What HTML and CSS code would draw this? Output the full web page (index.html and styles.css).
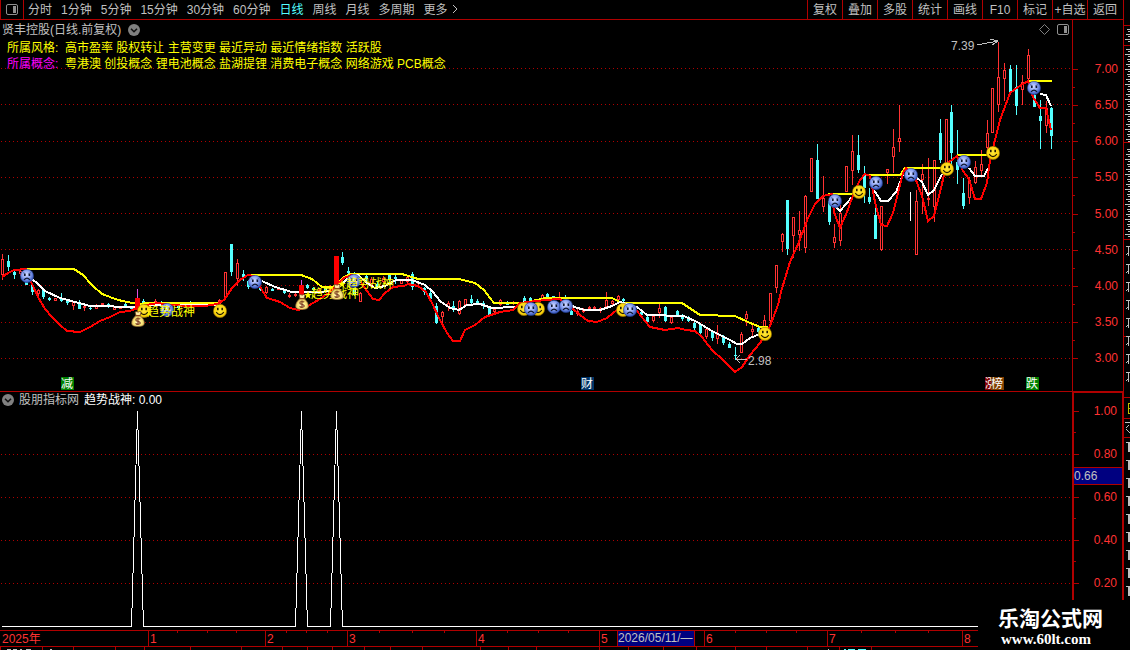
FILE: index.html
```html
<!Doctype html>
<html lang="zh-CN">
<head>
    <meta charset="UTF-8">
    <meta name="viewport" content="width=device-width, initial-scale=1.0">
    <title>贤丰控股 日线</title>
    <link rel="stylesheet" href="styles.css">
</head>
<body>
<svg class="defs" width="0" height="0">
    <defs>
        <radialGradient id="blue" cx="45%" cy="40%" r="60%">
            <stop offset="0" stop-color="#d4dcff"/>
            <stop offset="0.5" stop-color="#8ca4f4"/>
            <stop offset="1" stop-color="#2c4cb4"/>
        </radialGradient>
        <radialGradient id="gold" cx="50%" cy="45%" r="60%">
            <stop offset="0" stop-color="#ffe93c"/>
            <stop offset="0.7" stop-color="#fbd40c"/>
            <stop offset="1" stop-color="#b88a00"/>
        </radialGradient>
        <radialGradient id="cream" cx="50%" cy="60%" r="55%">
            <stop offset="0" stop-color="#fffbe0"/>
            <stop offset="0.5" stop-color="#ffee80"/>
            <stop offset="1" stop-color="#e0c060"/>
        </radialGradient>
        <symbol id="sad" viewBox="0 0 14 14">
            <circle cx="7" cy="7" r="6.7" fill="url(#blue)" stroke="#20387c" stroke-width="0.5"/>
            <path d="M3.3 3.8L5.6 4.8M10.7 3.8L8.4 4.8" stroke="#203060" stroke-width="0.8"/>
            <rect x="4" y="5" width="1.6" height="2" fill="#101830"/>
            <rect x="8.6" y="5" width="1.6" height="2" fill="#101830"/>
            <path d="M4 10.8Q7 7.4 10 10.8" fill="none" stroke="#101830" stroke-width="1.1"/>
        </symbol>
        <symbol id="happy" viewBox="0 0 14 14">
            <circle cx="7" cy="7" r="6.7" fill="url(#gold)" stroke="#8c6c00" stroke-width="0.5"/>
            <rect x="4" y="3.8" width="1.6" height="2.4" fill="#201800"/>
            <rect x="8.4" y="3.8" width="1.6" height="2.4" fill="#201800"/>
            <path d="M3.2 8.2Q7 13 10.8 8.2" fill="none" stroke="#201800" stroke-width="1.1"/>
        </symbol>
        <symbol id="bag" viewBox="0 0 14 16">
            <path d="M4 1L6 0.5L7 1.2L8.5 0.5L10.2 1L9 4.6H5Z" fill="#ffe9a0" stroke="#6c4020" stroke-width="0.8"/>
            <path d="M5 4.6H9C11.5 6.5 13.5 9.5 13.3 12.2C13.1 14.6 11.5 15.4 7 15.4S0.9 14.6 0.7 12.2C0.5 9.5 2.5 6.5 5 4.6Z" fill="url(#cream)" stroke="#8c6430" stroke-width="0.7"/>
            <path d="M4.6 4.7H9.4" stroke="#8c3c10" stroke-width="1"/>
            <path d="M9.2 8.2C8.4 7.2 4.8 7.2 4.8 8.9S9.3 10.2 9.3 12S5.4 13.6 4.6 12.4M7 6.6V14" fill="none" stroke="#7c3c20" stroke-width="1.1"/>
        </symbol>
        <symbol id="star" viewBox="0 0 12 12">
            <path d="M6 0L7.5 4.2L12 4.4L8.5 7.2L9.7 11.6L6 9L2.3 11.6L3.5 7.2L0 4.4L4.5 4.2Z" fill="#ffff00"/>
        </symbol>
        <symbol id="chevron" viewBox="0 0 12 12">
            <circle cx="6" cy="6" r="6" fill="#808080"/>
            <path d="M3 4.7L6 7.7L9 4.7" fill="none" stroke="#101010" stroke-width="1.6"/>
        </symbol>
        <symbol id="split" viewBox="0 0 12 11">
            <rect x="0.5" y="0.5" width="11" height="10" rx="1.5" fill="none" stroke="#909090"/>
            <rect x="7" y="2" width="3" height="7" fill="#909090"/>
        </symbol>
    </defs>
</svg>

<div class="app">
    <div class="main">
        <div class="toolbar">
            <button class="split" aria-label="分栏"><svg width="12" height="11"><use href="#split"/></svg></button>
            <div class="period">
                <button>分时</button>
                <button>1分钟</button>
                <button>5分钟</button>
                <button>15分钟</button>
                <button>30分钟</button>
                <button>60分钟</button>
                <button class="on">日线</button>
                <button>周线</button>
                <button>月线</button>
                <button>多周期</button>
                <button>更多<svg class="more" width="6" height="10"><path d="M1 1L5 5L1 9" fill="none" stroke="#c0c0c0"/></svg></button>
            </div>
            <div class="tools">
                <button>复权</button>
                <button>叠加</button>
                <button>多股</button>
                <button>统计</button>
                <button>画线</button>
                <button>F10</button>
                <button>标记</button>
                <button>+自选</button>
                <button>返回</button>
            </div>
        </div>

        <div class="panel price">
            <div class="plot">
                <svg id="kline" viewBox="0 20 1072 371"></svg>
                <div class="info">
                    <div class="title">
                        <span>贤丰控股(日线.前复权)</span>
                        <svg width="12" height="12"><use href="#chevron"/></svg>
                        <svg class="diamond" width="11" height="11"><path d="M5.5 0.5L10.5 5.5L5.5 10.5L0.5 5.5Z" fill="none" stroke="#808080"/></svg>
                        <svg width="12" height="11"><use href="#split"/></svg>
                    </div>
                    <p><b>所属风格:</b>高市盈率 股权转让 主营变更 最近异动 最近情绪指数 活跃股</p>
                    <p><b class="pink">所属概念:</b>粤港澳 创投概念 锂电池概念 盐湖提锂 消费电子概念 网络游戏 PCB概念</p>
                </div>
            </div>
            <ul class="axis">
                <li>7.00</li>
                <li>6.50</li>
                <li>6.00</li>
                <li>5.50</li>
                <li>5.00</li>
                <li>4.50</li>
                <li>4.00</li>
                <li>3.50</li>
                <li>3.00</li>
            </ul>
        </div>

        <div class="panel signal">
            <div class="plot">
                <svg id="signal" viewBox="0 392 1072 238"></svg>
                <div class="info">
                    <div class="title">
                        <svg width="12" height="12"><use href="#chevron"/></svg>
                        <span>股朋指标网</span>
                        <span class="white">趋势战神: 0.00</span>
                    </div>
                </div>
            </div>
            <ul class="axis">
                <li>1.00</li>
                <li>0.80</li>
                <li>0.60</li>
                <li>0.40</li>
                <li>0.20</li>
                <li class="cur">0.66</li>
            </ul>
        </div>

        <div class="time">
            <svg id="time" viewBox="0 630 1072 20"></svg>
        </div>
    </div>
    <div class="side">
        <svg id="side" width="6" height="650"></svg>
    </div>
    <div class="mark">
        <strong>乐淘公式网</strong>
        <span>www.60lt.com</span>
    </div>
</div>

<script>
    // [x, high, top, bottom, low, type]  r: up  c: down  f: filled  w: white
    var bars=[
        [2,254,259,275,280,'r'],[8,255,261,267,271,'c'],[14,270,272,275,279,'c'],[20,268,271,274,276,'r'],
        [26,276,280,285,285,'c'],[32,284,285,292,295,'c'],[38,289,290,294,298,'r'],[43,289,290,297,299,'c'],
        [49,297,298,300,301,'c'],[55,298,298,301,301,'r'],[61,293,298,301,302,'c'],[67,300,301,303,305,'c'],
        [73,301,302,306,310,'r'],[79,300,302,309,309,'c'],[84,305,306,308,311,'r'],[90,306,308,309,310,'c'],
        [96,304,305,309,309,'r'],[102,303,303,305,305,'r'],[108,303,304,307,308,'c'],[114,306,307,310,310,'r'],
        [120,307,307,308,309,'r'],[125,303,304,306,307,'c'],[131,306,307,309,309,'c'],
        [143,299,301,304,305,'c'],[149,304,305,307,308,'r'],[155,299,301,303,305,'r'],[161,301,302,304,305,'c'],
        [172,303,304,306,307,'r'],[178,305,306,308,309,'c'],[190,301,303,305,306,'c'],[202,303,304,306,307,'r'],
        [219,299,300,304,304,'r'],[225,272,272,298,298,'r'],[231,244,244,272,276,'c'],[237,259,263,279,286,'r'],
        [243,270,274,277,281,'c'],[248,280,281,287,289,'c'],[260,286,287,290,291,'c'],[266,286,287,293,294,'r'],
        [272,288,289,291,291,'c'],[278,287,288,290,290,'r'],[284,289,290,293,294,'c'],[289,293,295,297,298,'r'],
        [295,293,294,296,297,'r'],[307,284,285,288,289,'c'],[313,287,288,290,291,'c'],
        [319,288,290,292,293,'r'],[325,286,288,290,291,'c'],[330,285,287,290,291,'r'],[342,252,257,263,265,'c'],
        [348,267,271,273,275,'c'],[354,272,288,295,296,'c'],[360,292,293,302,302,'r'],[366,274,276,279,281,'c'],
        [371,277,279,287,288,'r'],[377,282,284,287,288,'c'],[383,276,278,282,283,'r'],[389,274,275,280,282,'c'],
        [395,275,277,279,284,'c'],[401,279,280,284,284,'r'],[407,276,277,282,283,'r'],[412,272,274,287,290,'c'],
        [418,281,282,284,285,'r'],[424,287,288,292,295,'c'],[430,291,293,299,300,'c'],[436,303,306,323,324,'c'],
        [442,311,312,317,324,'r'],[448,301,303,307,311,'r'],[453,301,306,309,312,'c'],[459,300,301,314,315,'r'],
        [465,299,299,305,306,'r'],[471,295,299,303,305,'c'],[477,299,301,303,304,'c'],[483,301,303,306,309,'c'],
        [489,306,308,315,317,'c'],[494,307,309,312,313,'r'],[500,299,300,305,306,'r'],[507,301,302,305,305,'c'],
        [513,301,302,304,305,'r'],[524,296,298,301,302,'c'],[530,297,298,301,302,'c'],
        [542,294,295,300,300,'r'],[547,293,294,297,298,'c'],[553,296,296,298,298,'c'],[559,292,298,300,300,'r'],
        [565,295,297,298,299,'c'],[571,310,311,315,315,'c'],[577,309,311,314,316,'r'],[583,308,310,312,313,'r'],
        [589,306,307,309,311,'r'],[594,306,307,309,311,'r'],[600,307,308,311,313,'r'],[606,292,300,307,308,'r'],
        [612,300,301,304,306,'r'],[618,295,296,300,301,'r'],[623,298,299,301,302,'c'],[641,311,312,315,317,'c'],
        [647,316,317,322,323,'c'],[653,315,316,321,322,'r'],[659,303,308,313,318,'r'],[665,306,307,321,322,'c'],
        [671,316,317,323,324,'r'],[677,310,311,315,316,'c'],[682,314,316,319,321,'c'],[688,316,317,321,322,'c'],
        [694,321,323,328,330,'c'],[700,324,325,333,335,'c'],[706,328,329,337,339,'r'],[712,330,332,338,341,'c'],
        [717,325,334,339,344,'r'],[723,335,337,343,345,'c'],[729,342,344,348,348,'c'],[735,347,355,356,360,'c'],
        [741,332,334,353,353,'r'],[746,311,314,319,326,'r'],[752,325,329,332,337,'r'],[758,326,328,332,335,'c'],
        [764,315,320,327,328,'r'],[770,293,293,321,322,'r'],[776,265,265,288,293,'r'],[782,233,234,242,252,'r'],
        [787,200,200,249,255,'c'],[793,217,217,236,258,'r'],[799,211,230,235,251,'r'],[805,195,196,248,253,'r'],
        [811,158,158,192,192,'r'],[817,144,160,199,199,'c'],[823,176,198,207,212,'r'],[829,198,201,222,225,'c'],
        [834,224,237,243,248,'r'],[840,205,213,241,246,'r'],[846,166,166,192,192,'r'],[852,135,151,171,185,'r'],
        [858,135,155,170,173,'c'],[864,166,175,188,203,'c'],[869,188,197,202,204,'c'],[875,200,215,239,239,'c'],
        [881,206,206,250,251,'r'],[887,169,169,173,184,'r'],[893,129,147,157,173,'r'],[899,105,138,142,152,'r'],
        [910,192,192,221,221,'w'],[916,190,201,255,255,'r'],[922,164,174,180,214,'r'],[928,158,198,200,206,'r'],
        [934,160,160,207,222,'r'],[940,119,133,160,163,'c'],[946,119,119,165,165,'r'],[951,105,112,153,165,'c'],
        [957,130,162,170,184,'c'],[963,178,193,206,209,'c'],[969,177,180,198,204,'r'],[975,161,167,183,184,'r'],
        [981,150,164,171,177,'r'],[987,120,133,148,155,'r'],[992,88,88,133,133,'r'],[998,42,77,105,112,'r'],
        [1004,63,70,79,101,'r'],[1010,65,69,92,93,'c'],[1016,65,87,106,115,'c'],[1022,75,82,90,105,'r'],
        [1028,49,55,79,80,'r'],[1034,92,95,107,107,'c'],[1040,100,116,121,149,'c'],[1046,101,108,126,133,'r'],
        [1051,107,108,136,149,'c'],
        [137,289,298,310,310,'f'],[301,280,285,295,296,'f'],[336,256,256,285,286,'f']
    ];
    var red=['2,277 8,273 14,270 26,269 32,284 38,297 45,309 52,317 60,325 67,331 80,332 90,327 100,321 110,317 120,312 130,311 137,308 146,305 158,303 170,305 190,306 205,306 217,304 224,300 232,288 240,280 248,275 254,276 262,290 267,298 274,300 280,302 290,308 298,310 305,308 313,303 320,299 330,292 337,285 344,278 352,275 360,281 367,291 373,299 379,300 385,293 393,287 404,286 408,284 418,286 426,292 432,303 440,320 447,333 453,341 460,341 465,330 475,325 485,317 500,312 513,310 520,303 545,300 560,299 573,309 580,315 588,321 597,322 607,318 618,309 625,305 637,311 645,321 650,327 665,330 678,328 686,330 695,331 702,337 712,350 722,359 735,372 742,367 750,355 760,343 766,334 770,326 778,305 781,292 790,262 799,242 808,218 815,204 823,196 832,194 834,212 840,228 847,212 855,190 860,180 865,174 870,176 875,202 881,225 887,226 893,213 898,193 903,173 906,168 916,180 922,196 928,221 934,216 940,192 945,171 949,162 957,156 963,171 969,179 975,199 981,199 987,183 990,160 1000,120 1010,93 1018,87 1028,81 1033,97 1040,108 1046,108 1051,130'];
    var yellow=['22,269 74,269 83,275 92,285 102,294 118,300 137,304 150,303 219,303',
        '248,275 301,275 312,279 322,287 333,287 344,277 350,274 402,274 418,279 459,279 475,283 484,290 490,298 494,303 524,303 545,298 612,298 622,303 682,303 700,315 735,316 748,322 760,327 768,327',
        '828,194 856,194','868,175 900,175 905,168 946,168','957,155 993,155','1028,81 1052,81'];
    var white=['32,279 38,284 45,291 60,298 75,302 90,306 137,307 150,305 217,305',
        '262,281 275,287 292,292 320,292 336,290 348,278 358,275 367,283 375,288 385,286 396,280 412,280 425,285 433,292 440,301 450,308 459,310 467,305 480,304 492,308 515,307 524,302',
        '566,301 574,307 585,310 600,310 612,306 620,302 637,307 647,315 684,316 697,322 712,331 730,340 737,344 742,344 750,338 765,332',
        '834,205 840,211 852,197','874,190 881,201 888,201 896,192 903,175','917,178 922,182 928,195 934,190 942,174',
        '969,168 975,176 984,176 988,168','1040,94 1046,95 1051,106'];
    var faces=[['sad',27,276],['happy',144,311],['sad',167,310],['happy',220,311],['sad',255,282],['sad',354,281],
        ['happy',524,309],['happy',538,309],['sad',531,309],['sad',554,307],['sad',566,306],['happy',623,310],
        ['sad',630,310],['happy',765,334],['sad',835,201],['happy',859,192],['sad',876,183],['sad',911,175],
        ['happy',947,169],['sad',964,162],['happy',993,153],['sad',1034,88]];
    // [x, text, color, width]
    var tags=[[61,'减','green',13],[581,'财','navy',13],[985,'涨','dark',6],[991,'榜','brown',13],[1026,'跌','green',13]];

    function line(cls,x1,y1,x2,y2){
        return '<path class="'+cls+'" d="M'+x1+' '+y1+'L'+x2+' '+y2+'"/>';
    }
    function text(cls,x,y,s){
        return '<text class="'+cls+'" x="'+x+'" y="'+y+'">'+s+'</text>';
    }
    function icon(id,x,y,w,h){
        return '<use href="#'+id+'" x="'+(x-w/2)+'" y="'+(y-h/2)+'" width="'+w+'" height="'+h+'"/>';
    }
    function curves(cls,list){
        var s='';
        for(var i=0;i<list.length;i++){
            s+='<polyline class="curve '+cls+'" points="'+list[i]+'"/>';
        }
        return s;
    }

    function kline(){
        var s='';
        [68,104,141,177,213,249,285,322,358].forEach(function (y) {
            s+=line('grid',1,y+0.5,1072,y+0.5);
        });
        bars.forEach(function (b) {
            var x=b[0],cx=x+0.5,t=b[5];
            if(t=='r'){
                s+=line('up',cx,b[1],cx,b[2])+line('up',cx,b[3],cx,b[4]);
                s+='<rect class="up" x="'+(x-0.5)+'" y="'+(b[2]+0.5)+'" width="2" height="'+Math.max(b[3]-b[2]-1,1)+'"/>';
            }else if(t=='c'){
                s+=line('down',cx,b[1],cx,b[4]);
                s+='<rect class="body" x="'+(x-1)+'" y="'+b[2]+'" width="3" height="'+(b[3]-b[2])+'"/>';
            }else if(t=='w'){
                s+=line('plain',cx,b[1],cx,b[4]);
            }
        });
        s+=curves('yellow',yellow)+curves('white',white)+curves('red',red);
        bars.forEach(function (b) {
            if(b[5]=='f'){
                s+=line('wick',b[0]+0.5,b[1],b[0]+0.5,b[2]);
                s+='<rect class="full" x="'+(b[0]-2)+'" y="'+b[2]+'" width="5" height="'+(b[3]-b[2])+'"/>';
            }
        });
        faces.forEach(function (f) {
            s+=icon(f[0],f[1],f[2],14,14);
        });
        s+=icon('star',308,295,8,8)+icon('star',342,284,8,8);
        s+=text('name',147,316,'趋势战神')+text('name',311,298,'趋势战神')+text('name',346,288,'趋势战神');
        s+=icon('bag',138,319,14,16)+icon('bag',302,302,14,16)+icon('bag',337,292,14,16);
        s+=text('value',951,50,'7.39')+'<path class="arrow" d="M977 45L998 41M990 39L998 41L992 45"/>';
        s+=text('value',748,365,'2.98')+'<path class="arrow" d="M747 359H736M740 355L736 359L740 363"/>';
        tags.forEach(function (t) {
            s+='<svg class="cut" x="'+t[0]+'" y="377" width="'+t[3]+'" height="13">';
            s+='<rect class="'+t[2]+'" width="13" height="13"/>'+text('tag',0,11,t[1])+'</svg>';
        });
        document.getElementById('kline').innerHTML=s;
    }

    function signal(){
        var s='',d='M2 626.5';
        [454,497,540,583].forEach(function (y) {
            s+=line('grid',1,y+0.5,1072,y+0.5);
        });
        [137,301,336].forEach(function (x) {
            d+='H'+(x-5.5)+'L'+(x+0.5)+' 411L'+(x+6.5)+' 626.5';
        });
        s+='<path class="plain" d="'+d+'H1072"/>';
        document.getElementById('signal').innerHTML=s;
    }

    function time(){
        var s=line('rule',0,630.5,1072,630.5)+line('rule',0,646.5,1072,646.5);
        s+=text('month',2,643,'2025年');
        [[148,1],[265,2],[347,3],[476,4],[599,5],[704,6],[827,7],[962,8]].forEach(function (m) {
            s+=line('rule',m[0]+0.5,630,m[0]+0.5,646)+text('month',m[0]+2,643,m[1]);
        });
        [177,207,236,286,306,327,379,412,444,507,538,568,735,766,796,861,895,928].forEach(function (x) {
            s+=line('rule',x+0.5,630,x+0.5,633);
        });
        [0,42,73,115,144,190,241,282,307,332,364,390,422,480,508,536,599,628,663,696,735,766,807,839,871].forEach(function (x) {
            s+=line('rule',x+0.5,646,x+0.5,650);
        });
        s+='<path class="bit" d="M7 649.5H11M13 649.5H17M20 649.5H22M26 649.5H31M50 649.5H52M828 649.5H829"/>';
        s+='<path class="down" d="M844 649.5H846M848 649.5H855M858 649.5H866"/>';
        s+='<rect class="date" x="617.5" y="630.5" width="77" height="16"/>'+text('value',618,642,'2026/05/11/—');
        document.getElementById('time').innerHTML=s;
    }

    // 右侧栏
    function side(){
        var s='',y;
        [25,45,142,239,336,397,418,437].forEach(function (y) {
            s+=line('rule',0,y+0.5,6,y+0.5);
        });
        for(y=29;y<236;y+=5){
            if(y%97<44||y%97>48){
                s+=line('bit',y%3+1,y+0.5,6,y+0.5)+line('bit',4,y+2.5,6,y+2.5);
            }
        }
        for(y=246;y<386;y+=18){
            s+='<path class="bit" d="M2 '+y+'.5H6M4.5 '+y+'V'+(y+10)+'M2 '+(y+9)+'L5 '+(y+6)+'"/>';
        }
        s+='<path class="day" d="M6 403.5H4.5V413.5H6M4 408.5H6"/><path class="bit" d="M1 422.5H6M5 425L2 428M2 429L6 433"/>';
        for(y=442;y<600;y+=18){
            s+='<path class="bit" d="M2 '+y+'.5H6"/><rect class="block" x="4" y="'+y+'" width="2" height="10"/>';
        }
        document.getElementById('side').innerHTML=s;
    }

    kline();
    signal();
    time();
    side();
</script>
</body>
</html>
```

FILE: styles.css
```css
body,ul,li,p{
    margin: 0;
    padding: 0;
    list-style: none;
}
body{
    background: #000;
    color: #c0c0c0;
    font: 12px/16px "Liberation Sans","Noto Sans CJK SC",sans-serif;
    overflow: hidden;
}
svg{
    display: block;
    flex: none;
}
.defs{
    position: absolute;
}
button{
    padding: 0;border: 0;
    background: none;
    color: inherit;
    font: inherit;
    white-space: nowrap;
    cursor: pointer;
}
.app{
    display: flex;
    position: relative;
}
.main{
    flex: 1;
    min-width: 0;
}
.toolbar{
    display: flex;
    height: 19px;
    border-bottom: 1px solid #b00000;
}
.split{
    width: 24px;
    box-sizing: border-box;
    border-left: 1px solid #b00000;
    border-right: 1px solid #b00000;
    display: flex;
    align-items: center;justify-content: center;
}
.period{
    flex: 1;
    display: flex;
    gap: 9px;
    padding-left: 4px;
}
.period .on{
    color: #54ffff;
}
.more{
    display: inline-block;
    margin-left: 4px;
}
.tools{
    display: flex;
    padding-right: 1px;
}
.tools button{
    width: 35px;
    box-sizing: border-box;
    border-left: 1px solid #b00000;
}
.panel{
    display: flex;
}
.plot{
    flex: 1;
    position: relative;
    min-width: 0;
}
.plot > svg,.time svg{
    width: 100%;
    height: auto;
}
.info{
    position: absolute;
    top: 0;left: 0;right: 0;
}
.title{
    display: flex;
    align-items: center;
    gap: 5px;
    height: 19px;
    padding: 0 3px 2px 2px;
}
.price .title{
    gap: 7px;
    padding-bottom: 1px;
}
.signal .title{
    height: 16px;
    padding-bottom: 0;
}
.diamond{
    margin-left: auto;
}
.info p{
    padding-left: 7px;
    color: #ff0;
    white-space: nowrap;
}
.info b{
    display: inline-block;
    width: 58px;
    font-weight: normal;
}
.info .pink{
    color: #f0f;
}
.white{
    color: #fff;
}

/* 坐标轴 */
.axis{
    width: 50px;
    display: flex;
    flex-direction: column;
    justify-content: space-between;
    border-left: 1px solid #b00000;
    color: #ff3232;
    text-align: right;
    position: relative;
}
.axis li{
    padding-right: 5px;
    position: relative;
}
.axis li::before,.axis li::after{
    content: "";
    position: absolute;
    left: 0;top: 8px;
    width: 5px;height: 1px;
    background: #b00000;
}
.axis li::after{
    top: 26px;
    width: 2px;
}
.price .axis{
    padding: 41px 0 25px;
}
.price .axis li:last-child::after{
    display: none;
}
.signal .plot{
    border-top: 1px solid #b00000;
}
.signal .axis{
    width: 48px;
    border: solid #b00000;
    border-width: 2px 1px 0 2px;
    padding: 10px 0 39px;
}
.signal .axis li::after{
    top: 29px;
}
.signal .axis .cur{
    position: absolute;
    top: 74px;left: 0;right: 0;
    border: solid #b00000;
    border-width: 1px 0;
    background: #000080;
    color: #c0c0c0;
    text-align: left;
}
.signal .axis .cur::before,.signal .axis .cur::after{
    display: none;
}
.time{
    margin-right: 51px;
}

/* 图形 */
.grid,.rule,.up,.down,.plain,.wick,.curve,.bit,.day,.arrow{
    fill: none;
    shape-rendering: crispEdges;
}
.cut{
    overflow: hidden;
}
.grid{
    stroke: #b00000;
    stroke-dasharray: 1 3;
}
.rule{
    stroke: #b00000;
}
.up{
    stroke: #ff3232;
}
.down{
    stroke: #54ffff;
}
.body{
    fill: #54ffff;
}
.plain,.curve.white{
    stroke: #fff;
}
.wick{
    stroke: #e050e0;
}
.full{
    fill: #f00;
}
.curve{
    stroke-width: 2;
}
.curve.red{
    stroke: #f00;
}
.curve.yellow{
    stroke: #ff0;
}
.arrow,.bit{
    stroke: #c0c0c0;
}
.day{
    stroke: #c0c000;
}
.block,.value{
    fill: #c0c0c0;
}
.name{
    fill: #ff0;
}
.tag{
    fill: #fff;
}
.month{
    fill: #ff3232;
}
.green{
    fill: #008000;
}
.navy{
    fill: #003468;
}
.dark{
    fill: #800000;
}
.brown{
    fill: #804000;
}
.date{
    fill: #000080;
    stroke: #b00000;
}
.side{
    width: 6px;
    border-left: 1px solid #b00000;
    overflow: hidden;
}
.mark{
    position: absolute;
    right: 0;bottom: 0;
    width: 152px;height: 50px;
    box-sizing: border-box;
    padding: 8px 0 0 20px;
    background: #000;
    color: #fff;
}
.mark strong{
    display: block;
    font-size: 21px;line-height: 22px;
}
.mark span{
    padding-left: 3px;
    font: bold 15px/18px "Liberation Serif",serif;
}
```
